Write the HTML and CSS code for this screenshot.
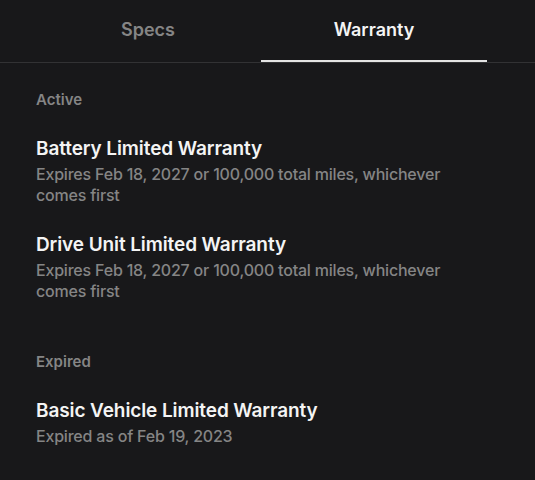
FILE: index.html
```html
<!DOCTYPE html>
<html>
<head>
<meta charset="utf-8">
<link rel="stylesheet" href="styles.css">
</head>
<body>
<div class="screen">
  <nav class="tabs">
    <div class="tab">Specs</div>
    <div class="tab active">Warranty</div>
  </nav>
  <section class="group">
    <div class="label">Active</div>
    <div class="item">
      <div class="title">Battery Limited Warranty</div>
      <div class="sub">Expires Feb 18, 2027 or 100,000 total miles, whichever comes first</div>
    </div>
    <div class="item">
      <div class="title">Drive Unit Limited Warranty</div>
      <div class="sub">Expires Feb 18, 2027 or 100,000 total miles, whichever comes first</div>
    </div>
  </section>
  <section class="group expired">
    <div class="label">Expired</div>
    <div class="item">
      <div class="title">Basic Vehicle Limited Warranty</div>
      <div class="sub">Expired as of Feb 19, 2023</div>
    </div>
  </section>
</div>
</body>
</html>
```
FILE: styles.css
```css
html, body {
  margin: 0;
  padding: 0;
  background: #18181a;
}
.screen {
  width: 535px;
  height: 480px;
  background: #18181a;
  font-family: Inter, "Noto Sans", sans-serif;
  overflow: hidden;
}
.tabs {
  display: flex;
  padding: 0 48px 0 35px;
  border-bottom: 1px solid #323234;
}
.tab {
  flex: 1;
  text-align: center;
  font-size: 18px;
  line-height: 24px;
  font-weight: 600;
  color: #858585;
  padding: 18px 0;
  border-bottom: 2px solid transparent;
}
.tab.active {
  color: #f4f4f4;
  border-bottom-color: #e4e4e4;
}
.group {
  padding: 27px 36px 0 36px;
}
.group.expired {
  padding-top: 50px;
}
.label {
  font-size: 15px;
  line-height: 20px;
  font-weight: 600;
  color: #858585;
}
.item {
  margin-top: 27px;
}
.title {
  font-size: 19px;
  line-height: 24px;
  font-weight: 600;
  color: #f4f4f4;
  letter-spacing: -0.1px;
}
.sub {
  margin-top: 3px;
  font-size: 16px;
  line-height: 21px;
  font-weight: 500;
  color: #858585;
  letter-spacing: -0.2px;
  max-width: 420px;
}
```
